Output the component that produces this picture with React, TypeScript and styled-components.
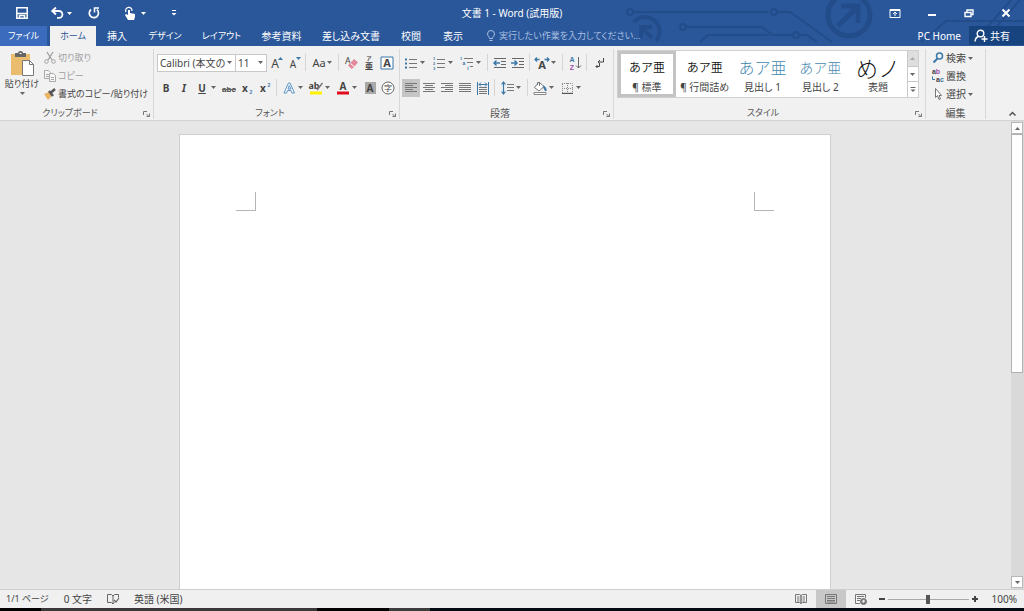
import React from "react";
import styled, { createGlobalStyle, css } from "styled-components";

const blue = "#2a579a";
const ink = "#444";
const accent = "#3b78a8";
const line = "#c8c8c8";
const fontStack = `"Noto Sans", "Noto Sans CJK JP", sans-serif`;

const GlobalStyle = createGlobalStyle`
  * { box-sizing: border-box; }
  body {
    margin: 0;
    font-family: ${fontStack};
    font-size: 10px;
    line-height: 14px;
    font-feature-settings: "palt";
    color: ${ink};
    background: #e6e6e6;
  }
  button, input, select {
    font: inherit;
    font-feature-settings: inherit;
    color: inherit;
    border: 0;
    padding: 0;
    margin: 0;
    background: none;
    border-radius: 0;
  }
  svg { display: block; flex: none; overflow: visible; }
`;

const Window = styled.div`
  display: flex;
  flex-direction: column;
  height: 100vh;
  overflow: hidden;
`;

/* ---------- header ---------- */

const Header = styled.header`
  position: relative;
  background: ${blue};
  color: #fff;
`;

const Circuit = styled.svg`
  position: absolute;
  right: 0;
  top: 0;
`;

const TitleBar = styled.div`
  position: relative;
  display: grid;
  grid-template-columns: 1fr auto 1fr;
  align-items: center;
  height: 26px;
`;

const QuickAccess = styled.div`
  display: flex;
  align-items: center;
  padding-left: 12px;
`;

const QuickButton = styled.button<{ $w: number }>`
  display: flex;
  align-items: center;
  justify-content: center;
  gap: 4px;
  width: ${(p) => p.$w}px;
  height: 24px;
`;

const Title = styled.h1`
  margin: 0;
  font-size: 10px;
  font-weight: 400;
  line-height: 26px;
`;

const WindowButtons = styled.div`
  display: flex;
  justify-content: flex-end;
`;

const WindowButton = styled.button`
  display: flex;
  align-items: center;
  justify-content: center;
  width: 37px;
  height: 26px;
`;

const TabBar = styled.nav`
  position: relative;
  display: flex;
  height: 20px;
`;

const Tab = styled.button<{ $w: number; $kind?: "file" | "active"; $kana?: boolean }>`
  width: ${(p) => p.$w}px;
  height: 20px;
  font-size: ${(p) => (p.$kana ? 9 : 10)}px;
  line-height: 20px;
  text-align: center;
  white-space: nowrap;
  color: #fff;
  ${(p) =>
    p.$kind === "file" &&
    css`
      background: #3a6bbd;
      margin-right: 3px;
    `}
  ${(p) =>
    p.$kind === "active" &&
    css`
      background: #f1f1f1;
      color: ${blue};
    `}
`;

const TellMe = styled.label`
  display: flex;
  align-items: center;
  gap: 2px;
  flex: 1;
  padding-left: 11px;
  color: #a9bfe0;
`;

const TellInput = styled.input`
  width: 200px;
  outline: 0;
  font-size: 9px;
  &::placeholder { color: #a9bfe0; opacity: 1; }
`;

const Account = styled.button`
  padding: 0 8px;
  color: #fff;
`;

const Share = styled.button`
  display: flex;
  align-items: center;
  gap: 3px;
  width: 55px;
  padding-left: 5px;
  background: #17447f;
  color: #fff;
  margin-bottom: 1px;
`;

/* ---------- ribbon ---------- */

const Ribbon = styled.div`
  display: flex;
  height: 75px;
  padding-top: 3px;
  background: #f1f1f1;
  border-bottom: 1px solid #d2d2d2;
`;

const GroupBox = styled.section<{ $w?: number }>`
  display: flex;
  flex-direction: column;
  ${(p) => (p.$w ? `flex: none; width: ${p.$w}px;` : "flex: 1; min-width: 0;")}
  height: 70px;
  border-right: 1px solid #d8d8d8;
`;

const GroupBody = styled.div<{ $pad?: number }>`
  flex: 1;
  min-height: 0;
  padding-left: ${(p) => p.$pad ?? 0}px;
`;

const GroupFooter = styled.div<{ $kana?: boolean; $launcher?: boolean }>`
  position: relative;
  height: 13px;
  padding-right: ${(p) => (p.$launcher ? 13 : 0)}px;
  font-size: ${(p) => (p.$kana ? 9 : 10)}px;
  line-height: 14px;
  text-align: center;
  color: #555;
`;

const Launcher = styled.button`
  position: absolute;
  right: 2px;
  top: 4px;
  width: 8px;
  height: 8px;
`;

const Row = styled.div`
  display: flex;
  align-items: center;
  height: 25px;
  &:first-child { margin-top: 1px; }
`;

const ToolButton = styled.button<{ $w: number; $on?: boolean }>`
  display: flex;
  align-items: center;
  flex: none;
  width: ${(p) => p.$w}px;
  height: 18px;
  background: ${(p) => (p.$on ? "#c5c5c5" : "none")};
`;

const Face = styled.span`
  display: flex;
  align-items: center;
  justify-content: center;
  width: 18px;
`;

const Divider = styled.span`
  flex: none;
  width: 1px;
  height: 17px;
  margin: 0 3px 0 2px;
  background: #d5d5d5;
`;

const SelectBox = styled.div<{ $w: number }>`
  display: flex;
  align-items: center;
  width: ${(p) => p.$w}px;
  height: 18px;
  padding-right: 3px;
  background: #fff;
  border: 1px solid ${line};
  & + & { border-left: 0; }
`;

const Select = styled.select`
  flex: 1;
  min-width: 0;
  height: 16px;
  padding-left: 2px;
  appearance: none;
  outline: 0;
`;

const ClipLayout = styled.div`
  display: flex;
  padding-left: 4px;
`;

const PasteButton = styled.button`
  display: flex;
  flex-direction: column;
  align-items: center;
  width: 36px;
  gap: 1px;
  padding-top: 2px;
  white-space: nowrap;
  font-size: 9px;
  line-height: 14px;
`;

const Stack = styled.div`
  display: flex;
  flex-direction: column;
`;

const TextButton = styled.button<{ $off?: boolean; $small?: boolean }>`
  display: flex;
  align-items: center;
  gap: 2px;
  height: 18px;
  padding-left: ${(p) => (p.$small ? 4 : 2)}px;
  white-space: nowrap;
  font-size: ${(p) => (p.$small ? 9 : 10)}px;
  color: ${(p) => (p.$off ? "#a0a0a0" : ink)};
`;

const Gallery = styled.div`
  display: grid;
  grid-template-columns: repeat(5, minmax(0, 1fr)) 11px;
  height: 48px;
  margin: 1px 6px 0 3px;
  background: #fff;
  border: 1px solid #cfcfcf;
`;

const StyleItem = styled.button<{ $on?: boolean }>`
  display: flex;
  flex-direction: column;
  align-items: center;
  justify-content: flex-end;
  padding-bottom: ${(p) => (p.$on ? 0 : 3)}px;
  border: ${(p) => (p.$on ? "3px solid #c3c3c3" : "0")};
  white-space: nowrap;
`;

const Sample = styled.span<{ $size: number; $color?: string; $weight?: number }>`
  font-family: "Noto Sans CJK JP", sans-serif;
  font-feature-settings: normal;
  font-weight: ${(p) => p.$weight ?? 300};
  font-size: ${(p) => p.$size}px;
  line-height: 26px;
  color: ${(p) => p.$color ?? "#111"};
`;

const GalleryScroll = styled.div`
  display: flex;
  flex-direction: column;
  border-left: 1px solid ${line};
`;

const GalleryButton = styled.button<{ $off?: boolean }>`
  display: flex;
  align-items: center;
  justify-content: center;
  flex: 1;
  background: ${(p) => (p.$off ? "#dedede" : "#fff")};
  & + & { border-top: 1px solid ${line}; }
`;

const RibbonEnd = styled.div`
  display: flex;
  align-items: flex-end;
  justify-content: flex-end;
  width: 38px;
  padding: 0 7px 2px 0;
`;

/* ---------- document ---------- */

const Workspace = styled.main`
  display: flex;
  flex: 1;
  min-height: 0;
  background: #e6e6e6;
`;

const Canvas = styled.div`
  display: flex;
  justify-content: center;
  flex: 1;
  padding: 13px 17px 0 16px;
`;

const Page = styled.article`
  display: flex;
  justify-content: space-between;
  width: 652px;
  padding: 57px 56px;
  background: #fff;
  border: 1px solid #cfcfcf;
  border-bottom: 0;
`;

const CropMark = styled.span<{ $side: "left" | "right" }>`
  width: 20px;
  height: 19px;
  border-bottom: 1px solid #b5b5b5;
  ${(p) => (p.$side === "left" ? "border-right" : "border-left")}: 1px solid #b5b5b5;
`;

const ScrollBar = styled.div`
  display: flex;
  flex-direction: column;
  width: 13px;
  padding: 1px 1px 1px 0;
  background: #d9d9d9;
`;

const ScrollButton = styled.button`
  display: flex;
  align-items: center;
  justify-content: center;
  height: 12px;
  background: #fff;
  border: 1px solid #b8b8b8;
`;

const ScrollTrack = styled.div`
  flex: 1;
`;

const ScrollThumb = styled.div`
  height: 54%;
  background: #fff;
  border: 1px solid #b0b0b0;
`;

/* ---------- status bar ---------- */

const StatusBar = styled.footer`
  display: flex;
  align-items: center;
  height: 19px;
  padding: 0 7px 0 6px;
  background: #f0f0f0;
  border-top: 1px solid #cfcfcf;
`;

const StatusItems = styled.div`
  display: flex;
  align-items: center;
  gap: 15px;
  flex: 1;
`;

const StatusText = styled.span<{ $small?: boolean }>`
  font-size: ${(p) => (p.$small ? 9 : 10)}px;
`;

const ViewButton = styled.button<{ $on?: boolean }>`
  display: flex;
  align-items: center;
  justify-content: center;
  width: 30px;
  height: 18px;
  background: ${(p) => (p.$on ? "#c8c8c8" : "none")};
`;

const ZoomStep = styled.button`
  display: flex;
  align-items: center;
  justify-content: center;
  width: 12px;
  height: 18px;
`;

const ZoomRange = styled.input`
  width: 81px;
  height: 12px;
  appearance: none;
  outline: 0;
  &::-webkit-slider-runnable-track {
    height: 1px;
    background: #a9a9a9;
  }
  &::-webkit-slider-thumb {
    appearance: none;
    width: 4px;
    height: 9px;
    margin-top: -4px;
    background: #555;
  }
`;

const ZoomValue = styled.span`
  width: 36px;
  text-align: right;
`;

const Taskbar = styled.div`
  display: flex;
  height: 3px;
  background: #020a12;
`;

const TaskSegment = styled.span<{ $w: number; $color: string }>`
  width: ${(p) => p.$w}%;
  background: ${(p) => p.$color};
`;

/* ---------- icons ---------- */

type IconProps = { children: React.ReactNode; s?: number; color?: string };

const Icon = ({ children, s = 14, color = ink }: IconProps) => (
  <svg width={s} height={s} viewBox={`0 0 ${s} ${s}`} fill="none" stroke={color} aria-hidden="true">
    {children}
  </svg>
);

const Caret = ({ up, color = "#666" }: { up?: boolean; color?: string }) => (
  <svg width="5" height="3" viewBox="0 0 5 3" fill={color} aria-hidden="true">
    <path d={up ? "M0 3h5L2.500 0z" : "M0 0h5L2.500 3z"} />
  </svg>
);

type LetterProps = {
  x: number;
  y: number;
  size: number;
  fill?: string;
  bold?: boolean;
  italic?: boolean;
  under?: boolean;
  children: React.ReactNode;
};

const Letter = ({ x, y, size, fill = ink, bold, italic, under, children }: LetterProps) => (
  <text
    x={x}
    y={y}
    fontFamily={size < 9 ? `"Liberation Sans", "Noto Sans CJK JP", sans-serif` : undefined}
    fontSize={size}
    fill={fill}
    stroke="none"
    textAnchor="middle"
    fontWeight={bold ? 700 : 400}
    fontStyle={italic ? "italic" : "normal"}
    textDecoration={under ? "underline" : "none"}
  >
    {children}
  </text>
);

const Lines = ({ rows, color = "#777" }: { rows: [number, number][]; color?: string }) => (
  <Icon color={color}>
    {rows.map(([a, b], i) => (
      <path key={i} d={`M${a} ${2.5 + i * 2}H${b}`} />
    ))}
  </Icon>
);

const BulletIcon = () => (
  <Icon color="#777">
    <path d="M5 3.500h8M5 7.500h8M5 11.500h8" />
    <path d="M1 2.500h2v2H1zM1 6.500h2v2H1zM1 10.500h2v2H1z" fill={accent} stroke="none" />
  </Icon>
);

const NumberIcon = () => (
  <Icon color="#777">
    <path d="M5 3.500h8M5 7.500h8M5 11.500h8" />
    <Letter x={2} y={4} size={4} bold fill={accent}>1</Letter>
    <Letter x={2} y={9} size={4} bold fill={accent}>2</Letter>
    <Letter x={2} y={14} size={4} bold fill={accent}>3</Letter>
  </Icon>
);

const MultiIcon = () => (
  <Icon color="#777">
    <path d="M4 2.500h9M7 6.500h6M10 10.500h3" />
    <Letter x={1} y={4} size={4} bold fill={accent}>1</Letter>
    <Letter x={4} y={9} size={5} bold fill={accent}>a</Letter>
    <Letter x={8} y={14} size={5} bold fill={accent}>i</Letter>
  </Icon>
);

const IndentIcon = ({ out }: { out?: boolean }) => (
  <Icon color="#666">
    <path d="M1 2.500h12M8 5.500h5M8 8.500h5M1 11.500h12" />
    <path d={out ? "M7 7H1M3.500 4.500L1 7l2.500 2.500" : "M0 7h6M3.500 4.500L6 7l-2.500 2.500"} stroke={accent} strokeWidth="1.500" />
  </Icon>
);

const WidthIcon = () => (
  <Icon>
    <Letter x={7} y={13} size={11} bold>A</Letter>
    <path d="M0 3.500H4.500M2 1.500L0 3.500l2 2M14 3.500H9.500M12 1.500l2 2-2 2" stroke={accent} strokeWidth="1.300" />
  </Icon>
);

const SortIcon = () => (
  <Icon>
    <Letter x={4} y={6} size={7} bold fill={accent}>A</Letter>
    <Letter x={4} y={14} size={7} bold fill="#9a4fa8">Z</Letter>
    <path d="M10.500 1v11M8 9.500l2.500 2.500L13 9.500" stroke="#666" />
  </Icon>
);

const MarksIcon = () => (
  <Icon>
    <path d="M11.500 2v4H6M8 4L6 6l2 2M7.500 8v2.500H4M5.500 9L4 10.500 5.500 12" />
  </Icon>
);

const DistributeIcon = () => (
  <Icon color="#777">
    <path d="M3 6.500h8M3 8.500h8M3 10.500h8M3 12.500h8" />
    <path d="M1.500 1v13M12.500 1v13M3 3.500h8M5 1.500L3 3.500l2 2M9 1.500l2 2-2 2" stroke={accent} />
  </Icon>
);

const SpacingIcon = () => (
  <Icon color="#777">
    <path d="M7 3.500h7M7 6.500h7M7 9.500h7" />
    <path d="M3.500 1v12M1.500 3.500L3.500 1l2 2.500M1.500 10.500l2 2.500 2-2.500" stroke={accent} strokeWidth="1.200" />
  </Icon>
);

const BucketIcon = () => (
  <Icon>
    <path d="M6 1L1.500 6.500 6 10l5-4.500z" fill="#fff" stroke="#777" />
    <path d="M4.500 4V1.500h2V5" stroke="#777" />
    <path d="M10.500 5c2 1 3 3 2.500 5-1 0-2-2-2.500-5z" fill={accent} stroke={accent} />
    <path d="M1 11.500h12v2H1z" fill="#fff" stroke="#888" />
  </Icon>
);

const BorderIcon = () => (
  <Icon color="#888">
    <path d="M2 2.500h10.500V12H2.500V2M7.500 2v10M2 7.500h10.500" strokeDasharray="1 1" />
    <path d="M2 12.500h11" stroke="#555" />
  </Icon>
);

const GrowIcon = ({ down }: { down?: boolean }) => (
  <Icon>
    <Letter x={6} y={12} size={down ? 10 : 12}>A</Letter>
    <path d={down ? "M9 1h5l-2.500 3z" : "M9 4h5L11.500 1z"} fill={accent} stroke="none" />
  </Icon>
);

const EraserIcon = () => (
  <Icon>
    <Letter x={4} y={8} size={9}>A</Letter>
    <path d="M10 3.500l3.500 3L8 12.500 4.500 9.500z" fill="#e2899c" stroke="#e2899c" />
    <path d="M6.500 7.500l3.500 3" stroke="#fff" />
  </Icon>
);

const RubyIcon = () => (
  <Icon>
    <Letter x={7} y={4} size={5} bold>ア</Letter>
    <Letter x={7} y={13} size={8} bold>亜</Letter>
  </Icon>
);

const BoxAIcon = () => (
  <Icon>
    <path d="M1 1h12v12H1z" fill="#fff" stroke={accent} />
    <Letter x={7} y={11} size={11} bold>A</Letter>
  </Icon>
);

const OutlineAIcon = () => (
  <Icon>
    <path d="M2 12L6.500 2h1.500L12.500 12h-2.500l-1-2.500H5.500L4.500 12z" fill="#fff" stroke="#5b93c5" />
    <path d="M6 8h3L7.300 4.500z" stroke="#5b93c5" />
  </Icon>
);

const HighlightIcon = () => (
  <Icon>
    <Letter x={5} y={8} size={9} bold>ab</Letter>
    <path d="M13.500 2L8 9" strokeWidth="1.500" stroke="#777" />
    <path d="M1 10.500h12v3H1z" fill="#fff200" stroke="none" />
  </Icon>
);

const ColorAIcon = () => (
  <Icon>
    <Letter x={7} y={9} size={10} bold>A</Letter>
    <path d="M1 10.500h12v3H1z" fill="#e00b1c" stroke="none" />
  </Icon>
);

const ShadeAIcon = () => (
  <Icon>
    <path d="M2 1h11v12H2z" fill="#a9a9a9" stroke="none" />
    <Letter x={7} y={11} size={10} bold>A</Letter>
  </Icon>
);

const CircleIcon = () => (
  <Icon>
    <circle cx="7" cy="7" r="6" fill="#fff" stroke="#666" />
    <Letter x={7} y={10} size={8}>字</Letter>
  </Icon>
);

const ScriptIcon = ({ sup }: { sup?: boolean }) => (
  <Icon>
    <Letter x={5} y={11} size={10} bold>x</Letter>
    <Letter x={11} y={sup ? 6 : 13} size={5} bold fill={accent}>2</Letter>
  </Icon>
);

const StrikeIcon = () => (
  <Icon>
    <Letter x={7} y={11} size={8} bold>abc</Letter>
    <path d="M0 8.500h14" stroke="#666" />
  </Icon>
);

const CaseIcon = () => (
  <Icon>
    <Letter x={8} y={11} size={11}>Aa</Letter>
  </Icon>
);

const PasteIcon = () => (
  <svg width="26" height="25" viewBox="0 0 26 25" aria-hidden="true">
    <path d="M2 3h19v21H2z" fill="#e9bd6d" />
    <path d="M6 6V2h3a2.500 2 0 0 1 5 0h3v4z" fill="#666" />
    <path d="M10.500 2.500h2" stroke="#fff" />
    <path d="M13.500 9.500h7l4 4v11h-11z" fill="#fff" stroke="#777" />
    <path d="M20.500 9.500v4h4" fill="none" stroke="#777" />
  </svg>
);

const CutIcon = () => (
  <Icon s={12} color="#a2a2a2">
    <path d="M3 0l5 8M9 0L4 8" strokeWidth="1.400" />
    <circle cx="2.500" cy="9.500" r="1.800" />
    <circle cx="9.500" cy="9.500" r="1.800" />
  </Icon>
);

const CopyIcon = () => (
  <Icon s={12} color="#a8a8a8">
    <path d="M.5.5h4l2 2v6h-6zM2 4.500h3M2 6.500h3" fill="#f6f6f6" />
    <path d="M5.500 3.500h4l2 2v6h-6zM7 7.500h3M7 9.500h3" fill="#f6f6f6" />
  </Icon>
);

const BrushIcon = () => (
  <Icon s={12}>
    <path d="M0 6l5-2 3 4-4 4z" fill="#e9b564" stroke="none" />
    <path d="M5 3l4 5M7 4.500L11 1" strokeWidth="2.500" stroke="#555" />
  </Icon>
);

const FindIcon = () => (
  <Icon s={12} color={accent}>
    <circle cx="7.500" cy="4" r="3" strokeWidth="1.500" />
    <path d="M5.500 6.500L1.500 10.500" strokeWidth="2" />
  </Icon>
);

const ReplaceIcon = () => (
  <Icon s={12}>
    <Letter x={4} y={4} size={7} bold>
      a<tspan fill="#9a4fa8">b</tspan>
    </Letter>
    <Letter x={8} y={12} size={7} bold>
      a<tspan fill={accent}>c</tspan>
    </Letter>
    <path d="M.5 6.500v3H3" stroke={accent} />
  </Icon>
);

const PointerIcon = () => (
  <Icon s={12}>
    <path d="M3.500.5v9l2-2 1.500 4 1.500-.5L7 7.500h2.500z" fill="#fff" stroke="#777" />
  </Icon>
);

const SaveIcon = () => (
  <Icon s={12} color="#fff">
    <path d="M.8.800h10.400v10.400H.800zM1 6.500h10" strokeWidth="1.500" />
    <path d="M3.500 11V8.500h5V11" strokeWidth="1.500" />
  </Icon>
);

const UndoIcon = () => (
  <Icon s={12} color="#fff">
    <path d="M1.500 4H8a3.200 3.200 0 0 1 0 6.800H6M5 .5L1.200 4 5 7.500" strokeWidth="1.800" />
  </Icon>
);

const RedoIcon = () => (
  <Icon s={12} color="#fff">
    <path d="M3 2.500A4.600 4.600 0 1 0 9 2.700" strokeWidth="1.700" />
    <path d="M6.500 5.500V1H11" strokeWidth="1.500" />
  </Icon>
);

const TouchIcon = () => (
  <Icon s={14} color="#fff">
    <path d="M3 6a3.200 3.200 0 1 1 6-1" strokeWidth="1.200" />
    <path d="M5 4v5L3 8l-1 1 3 5h6l1-3V8L7 7V4z" fill="#fff" stroke="none" />
  </Icon>
);

const CustomizeIcon = () => (
  <Icon s={6} color="#fff">
    <path d="M1 .5h4" />
    <path d="M.5 3h5L3 5.500z" fill="#fff" stroke="none" />
  </Icon>
);

const BulbIcon = () => (
  <Icon s={12} color="#a9bfe0">
    <path d="M4.500 8.500C4.500 6.500 2.500 6 2.500 4a3.500 3.500 0 0 1 7 0c0 2-2 2.500-2 4.500zM4.500 10.500h3" />
  </Icon>
);

const PersonIcon = () => (
  <Icon s={13} color="#fff">
    <circle cx="6.500" cy="4.500" r="3.300" strokeWidth="1.400" />
    <path d="M1 12.500c.3-3 1.500-4.500 3.500-5M10.500 7v6M7.500 10h6" strokeWidth="1.400" />
  </Icon>
);

const LauncherIcon = () => (
  <Icon s={8} color="#777">
    <path d="M.5 5V1.500H4M3.500 4L6 6.500M6.500 3.500v3h-3" />
  </Icon>
);

const ProofIcon = () => (
  <Icon s={12} color="#666">
    <path d="M.5 1.500h4L6 3v8L4.500 9.500h-4zM6 3l1.500-1.500h4v3M6 11l1.500-1.500" />
    <path d="M7 7l2 2 3-4" strokeWidth="1.200" />
  </Icon>
);

const ReadIcon = () => (
  <Icon s={12} color="#777">
    <path d="M.5 1.500h4L6 2.500v8L4.500 9.500h-4zM11.500 1.500h-4L6 2.500v8l1.500-1h4zM2 4h2.500M2 6h2.500M2 8h2.500M7.500 4H10M7.500 6H10M7.500 8H10" />
  </Icon>
);

const PrintIcon = () => (
  <Icon s={12} color="#777">
    <path d="M.5 1.500h11v9H.5zM2 3.500h8M2 5.500h8M2 7.500h8M2 9h8" />
  </Icon>
);

const WebIcon = () => (
  <Icon s={12} color="#777">
    <path d="M5 10.500H.5v-9h10V5M2 3.500h7M2 5.500h4M2 7.500h3" />
    <circle cx="8.500" cy="8.500" r="3" fill="#777" />
    <path d="M7 8l2-1.500 1 2-2 1.500z" fill="#eee" stroke="none" />
  </Icon>
);

const CircuitArt = () => (
  <Circuit width="400" height="46" viewBox="0 0 400 46" fill="none" stroke="#234c8a" strokeWidth="2" aria-hidden="true">
    <circle cx="6" cy="12" r="3" />
    <path d="M9 12H145M147 12a3 3 0 1 0 6 0 3 3 0 1 0-6 0M153 12h13l42 30" />
    <circle cx="59" cy="27" r="3" />
    <path d="M62 27h76l10 8h21M76 42l8-7h61" />
    <circle cx="172" cy="35" r="3" />
    <path d="M175 35h8l10 7" />
    <path d="M10 22a14 14 0 0 1 22 19" strokeWidth="4" />
    <path d="M28 38L17 27M17 38V27h11" strokeWidth="4" />
    <circle cx="225" cy="15" r="21" strokeWidth="5" />
    <path d="M214 26l19-19M217 6h17v17" strokeWidth="5" />
    <path d="M297 42l25-21h78M350 42L387 0M359 42L396 0" />
  </Circuit>
);

/* ---------- composed parts ---------- */

type ToolProps = {
  label: string;
  children: React.ReactNode;
  caret?: number;
  on?: boolean;
};

const Tool = ({ label, children, caret = 0, on }: ToolProps) => (
  <ToolButton aria-label={label} $w={18 + caret} $on={on}>
    <Face>{children}</Face>
    {caret > 0 && <Caret />}
  </ToolButton>
);

type GroupProps = {
  name: string;
  w?: number;
  pad?: number;
  kana?: boolean;
  launcher?: boolean;
  children: React.ReactNode;
};

const Group = ({ name, w, pad, kana, launcher = true, children }: GroupProps) => (
  <GroupBox $w={w} aria-label={name}>
    <GroupBody $pad={pad}>{children}</GroupBody>
    <GroupFooter $kana={kana} $launcher={launcher}>
      {name}
      {launcher && (
        <Launcher aria-label={`${name}の設定`}>
          <LauncherIcon />
        </Launcher>
      )}
    </GroupFooter>
  </GroupBox>
);

const tabs: { name: string; w: number; kind?: "file" | "active"; kana?: boolean }[] = [
  { name: "ファイル", w: 47, kind: "file", kana: true },
  { name: "ホーム", w: 46, kind: "active", kana: true },
  { name: "挿入", w: 42 },
  { name: "デザイン", w: 54, kana: true },
  { name: "レイアウト", w: 59, kana: true },
  { name: "参考資料", w: 61 },
  { name: "差し込み文書", w: 78 },
  { name: "校閲", w: 42 },
  { name: "表示", w: 42 },
];

const styleItems: { name: string; sample: string; size: number; on?: boolean; color?: string; weight?: number }[] = [
  { name: "¶ 標準", sample: "あア亜", size: 12, on: true, weight: 350 },
  { name: "¶ 行間詰め", sample: "あア亜", size: 12, weight: 350 },
  { name: "見出し 1", sample: "あア亜", size: 16, color: "#4589b0" },
  { name: "見出し 2", sample: "あア亜", size: 14, color: "#4589b0" },
  { name: "表題", sample: "めノ", size: 22, weight: 300 },
];

export default function App() {
  return (
    <Window>
      <GlobalStyle />
      <Header>
        <CircuitArt />
        <TitleBar>
          <QuickAccess>
            <QuickButton $w={20} aria-label="上書き保存"><SaveIcon /></QuickButton>
            <QuickButton $w={58} aria-label="元に戻す"><UndoIcon /><Caret color="#fff" /></QuickButton>
            <QuickButton $w={8} aria-label="やり直し"><RedoIcon /></QuickButton>
            <QuickButton $w={72} aria-label="タッチ/マウス モードの切り替え"><TouchIcon /><Caret color="#fff" /></QuickButton>
            <QuickButton $w={8} aria-label="クイック アクセス ツール バーのカスタマイズ"><CustomizeIcon /></QuickButton>
          </QuickAccess>
          <Title>文書 1 - Word (試用版)</Title>
          <WindowButtons>
            <WindowButton aria-label="リボンの表示オプション">
              <Icon s={12} color="#fff"><path d="M1 2.500h10v8H1zM1 3.500h10M6 9V5.500M4 7l2-2 2 2" /></Icon>
            </WindowButton>
            <WindowButton aria-label="最小化">
              <Icon s={10} color="#fff"><path d="M1 7h8" strokeWidth="2" /></Icon>
            </WindowButton>
            <WindowButton aria-label="元に戻す (縮小)">
              <Icon s={10} color="#fff"><path d="M1 4.500h6v4H1zM3 4V2h6v4.500H7" strokeWidth="1.400" /></Icon>
            </WindowButton>
            <WindowButton aria-label="閉じる">
              <Icon s={10} color="#fff"><path d="M1.500 1.500l7 7M8.500 1.500l-7 7" strokeWidth="2" /></Icon>
            </WindowButton>
          </WindowButtons>
        </TitleBar>
        <TabBar>
          {tabs.map((t) => (
            <Tab key={t.name} $w={t.w} $kind={t.kind} $kana={t.kana}>{t.name}</Tab>
          ))}
          <TellMe>
            <BulbIcon />
            <TellInput aria-label="操作アシスト" placeholder="実行したい作業を入力してください..." />
          </TellMe>
          <Account>PC Home</Account>
          <Share><PersonIcon />共有</Share>
        </TabBar>
      </Header>

      <Ribbon>
        <Group name="クリップボード" w={154} kana>
          <ClipLayout>
            <PasteButton>
              <PasteIcon />
              貼り付け
              <Caret />
            </PasteButton>
            <Stack>
              <TextButton $off $small><CutIcon />切り取り</TextButton>
              <TextButton $off $small><CopyIcon />コピー</TextButton>
              <TextButton $small><BrushIcon />書式のコピー/貼り付け</TextButton>
            </Stack>
          </ClipLayout>
        </Group>

        <Group name="フォント" w={246} pad={3} kana>
          <Row>
            <SelectBox $w={79}>
              <Select aria-label="フォント"><option>Calibri (本文の</option></Select>
              <Caret />
            </SelectBox>
            <SelectBox $w={31}>
              <Select aria-label="フォント サイズ"><option>11</option></Select>
              <Caret />
            </SelectBox>
            <Tool label="フォントの拡大"><GrowIcon /></Tool>
            <Tool label="フォントの縮小"><GrowIcon down /></Tool>
            <Divider />
            <Tool label="文字種の変換" caret={9}><CaseIcon /></Tool>
            <Divider />
            <Tool label="すべての書式をクリア"><EraserIcon /></Tool>
            <Tool label="ルビ"><RubyIcon /></Tool>
            <Tool label="囲み線"><BoxAIcon /></Tool>
          </Row>
          <Row>
            <Tool label="太字"><Icon><Letter x={7} y={11} size={10} bold>B</Letter></Icon></Tool>
            <Tool label="斜体"><Icon><Letter x={7} y={11} size={10} bold italic>I</Letter></Icon></Tool>
            <Tool label="下線" caret={9}><Icon><Letter x={7} y={11} size={10} bold under>U</Letter></Icon></Tool>
            <Tool label="取り消し線"><StrikeIcon /></Tool>
            <Tool label="下付き"><ScriptIcon /></Tool>
            <Tool label="上付き"><ScriptIcon sup /></Tool>
            <Divider />
            <Tool label="文字の効果" caret={9}><OutlineAIcon /></Tool>
            <Tool label="蛍光ペンの色" caret={9}><HighlightIcon /></Tool>
            <Tool label="フォントの色" caret={9}><ColorAIcon /></Tool>
            <Tool label="文字の網かけ"><ShadeAIcon /></Tool>
            <Tool label="囲い文字"><CircleIcon /></Tool>
          </Row>
        </Group>

        <Group name="段落" w={214} pad={2}>
          <Row>
            <Tool label="箇条書き" caret={10}><BulletIcon /></Tool>
            <Tool label="段落番号" caret={10}><NumberIcon /></Tool>
            <Tool label="アウトライン" caret={9}><MultiIcon /></Tool>
            <Divider />
            <Tool label="インデントを減らす"><IndentIcon out /></Tool>
            <Tool label="インデントを増やす"><IndentIcon /></Tool>
            <Divider />
            <Tool label="拡張書式" caret={9}><WidthIcon /></Tool>
            <Divider />
            <Tool label="並べ替え"><SortIcon /></Tool>
            <Divider />
            <Tool label="編集記号の表示"><MarksIcon /></Tool>
          </Row>
          <Row>
            <Tool label="左揃え" on><Lines rows={[[1, 13], [1, 9], [1, 13], [1, 9], [1, 13]]} /></Tool>
            <Tool label="中央揃え"><Lines rows={[[1, 13], [3, 11], [1, 13], [3, 11], [1, 13]]} /></Tool>
            <Tool label="右揃え"><Lines rows={[[1, 13], [5, 13], [1, 13], [5, 13], [1, 13]]} /></Tool>
            <Tool label="両端揃え"><Lines rows={[[1, 13], [1, 13], [1, 13], [1, 13], [1, 13]]} /></Tool>
            <Tool label="均等割り付け"><DistributeIcon /></Tool>
            <Divider />
            <Tool label="行と段落の間隔" caret={9}><SpacingIcon /></Tool>
            <Divider />
            <Tool label="塗りつぶし" caret={9}><BucketIcon /></Tool>
            <Tool label="罫線" caret={9}><BorderIcon /></Tool>
          </Row>
        </Group>

        <Group name="スタイル" kana>
          <Gallery>
            {styleItems.map((s) => (
              <StyleItem key={s.name} $on={s.on}>
                <Sample $size={s.size} $color={s.color} $weight={s.weight}>{s.sample}</Sample>
                {s.name}
              </StyleItem>
            ))}
            <GalleryScroll>
              <GalleryButton $off aria-label="前の行"><Caret up color="#aaa" /></GalleryButton>
              <GalleryButton aria-label="次の行"><Caret /></GalleryButton>
              <GalleryButton aria-label="その他">
                <Icon s={6} color="#666">
                  <path d="M.5.500h5" />
                  <path d="M.5 2.500h5L3 5z" fill="#666" stroke="none" />
                </Icon>
              </GalleryButton>
            </GalleryScroll>
          </Gallery>
        </Group>

        <Group name="編集" w={60} pad={4} launcher={false}>
          <Stack>
            <TextButton><FindIcon />検索<Caret /></TextButton>
            <TextButton><ReplaceIcon />置換</TextButton>
            <TextButton><PointerIcon />選択<Caret /></TextButton>
          </Stack>
        </Group>

        <RibbonEnd>
          <button aria-label="リボンを折りたたむ">
            <Icon s={9} color="#555"><path d="M1.500 6.500l3-3 3 3" strokeWidth="1.500" /></Icon>
          </button>
        </RibbonEnd>
      </Ribbon>

      <Workspace>
        <Canvas>
          <Page>
            <CropMark $side="left" />
            <CropMark $side="right" />
          </Page>
        </Canvas>
        <ScrollBar>
          <ScrollButton aria-label="上へスクロール"><Caret up /></ScrollButton>
          <ScrollTrack><ScrollThumb /></ScrollTrack>
          <ScrollButton aria-label="下へスクロール"><Caret /></ScrollButton>
        </ScrollBar>
      </Workspace>

      <StatusBar>
        <StatusItems>
          <StatusText $small>1/1 ページ</StatusText>
          <StatusText>0 文字</StatusText>
          <ProofIcon />
          <StatusText>英語 (米国)</StatusText>
        </StatusItems>
        <ViewButton aria-label="閲覧モード"><ReadIcon /></ViewButton>
        <ViewButton $on aria-label="印刷レイアウト"><PrintIcon /></ViewButton>
        <ViewButton aria-label="Web レイアウト"><WebIcon /></ViewButton>
        <ZoomStep aria-label="縮小"><Icon s={6}><path d="M0 3h6" strokeWidth="2" /></Icon></ZoomStep>
        <ZoomRange type="range" aria-label="ズーム" min={0} max={200} defaultValue={98} />
        <ZoomStep aria-label="拡大"><Icon s={6}><path d="M0 3h6M3 0v6" strokeWidth="2" /></Icon></ZoomStep>
        <ZoomValue>100%</ZoomValue>
      </StatusBar>
      <Taskbar>
        <TaskSegment $w={4} $color="#000" />
        <TaskSegment $w={27} $color="#3a3838" />
        <TaskSegment $w={7} $color="#000" />
        <TaskSegment $w={4} $color="#3c3c3c" />
      </Taskbar>
    </Window>
  );
}
